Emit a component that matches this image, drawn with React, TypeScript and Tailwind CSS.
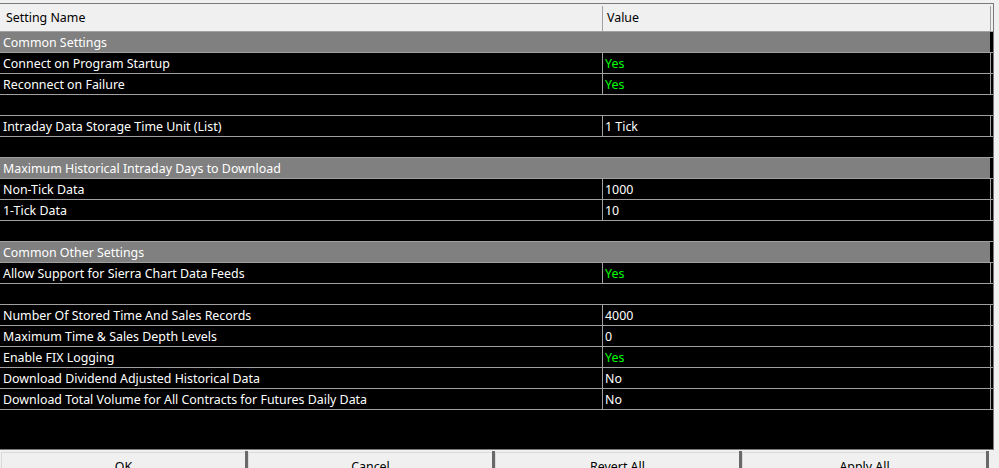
type Row =
  | { kind: 'group'; name: string }
  | { kind: 'blank' }
  | { kind: 'item'; name: string; value: string; green?: boolean }

const ROWS: Row[] = [
  { kind: 'group', name: 'Common Settings' },
  { kind: 'item', name: 'Connect on Program Startup', value: 'Yes', green: true },
  { kind: 'item', name: 'Reconnect on Failure', value: 'Yes', green: true },
  { kind: 'blank' },
  { kind: 'item', name: 'Intraday Data Storage Time Unit (List)', value: '1 Tick' },
  { kind: 'blank' },
  { kind: 'group', name: 'Maximum Historical Intraday Days to Download' },
  { kind: 'item', name: 'Non-Tick Data', value: '1000' },
  { kind: 'item', name: '1-Tick Data', value: '10' },
  { kind: 'blank' },
  { kind: 'group', name: 'Common Other Settings' },
  { kind: 'item', name: 'Allow Support for Sierra Chart Data Feeds', value: 'Yes', green: true },
  { kind: 'blank' },
  { kind: 'item', name: 'Number Of Stored Time And Sales Records', value: '4000' },
  { kind: 'item', name: 'Maximum Time & Sales Depth Levels', value: '0' },
  { kind: 'item', name: 'Enable FIX Logging', value: 'Yes', green: true },
  { kind: 'item', name: 'Download Dividend Adjusted Historical Data', value: 'No' },
  { kind: 'item', name: 'Download Total Volume for All Contracts for Futures Daily Data', value: 'No' },
]

const BUTTONS = ['OK', 'Cancel', 'Revert All', 'Apply All']

function SettingRow({ row }: { row: Row }) {
  if (row.kind === 'blank') {
    return <div className="h-[21px] border-b border-[#a0a0a0]" />
  }
  if (row.kind === 'group') {
    return (
      <div className="flex h-[21px] border-b border-[#a0a0a0]">
        <div className="flex w-[990px] items-center bg-[#808080] pl-[3px] pt-[2px] text-white">
          {row.name}
        </div>
      </div>
    )
  }
  return (
    <div className="flex h-[21px] border-b border-[#a0a0a0]">
      <div className="flex w-[603px] items-center border-r border-[#a0a0a0] pl-[3px] pt-[2px] text-white">
        {row.name}
      </div>
      <div
        className={`flex w-[388px] items-center border-r border-[#a0a0a0] pl-[2px] pt-[2px] ${
          row.green ? 'text-[#00ff00]' : 'text-white'
        }`}
      >
        {row.value}
      </div>
    </div>
  )
}

export default function App() {
  return (
    <div
      className="h-[468px] w-[999px] overflow-hidden bg-[#f0f0f0] pt-[3px] text-[12.4px] leading-none"
      style={{ fontFamily: '"Segoe UI", "Noto Sans", sans-serif' }}
    >
      {/* settings grid */}
      <div className="flex h-[447px] w-[994px] flex-col border-y border-r border-[#7a7a7a] bg-black">
        <div className="flex h-[28px] shrink-0 border-b border-[#a0a0a0] bg-[#f0f0f0] pt-[2px] text-black">
          <div className="flex w-[603px] items-center border-r border-[#a0a0a0] pl-[6px]">
            Setting Name
          </div>
          <div className="flex w-[388px] items-center border-r border-[#a0a0a0] pl-[4px]">
            Value
          </div>
        </div>
        {ROWS.map((row, i) => (
          <SettingRow key={i} row={row} />
        ))}
      </div>

      {/* dialog buttons */}
      <div className="mt-[1px] flex pl-[1px]">
        {BUTTONS.map((label) => (
          <div key={label} className="flex w-[247px] border-r-[3px] border-[#696969]">
            <button
              type="button"
              className="mt-[1px] flex h-[30px] flex-1 items-center justify-center border-l border-t border-[#dadada] bg-[#f0f0f0] text-black"
            >
              {label}
            </button>
          </div>
        ))}
      </div>
    </div>
  )
}
